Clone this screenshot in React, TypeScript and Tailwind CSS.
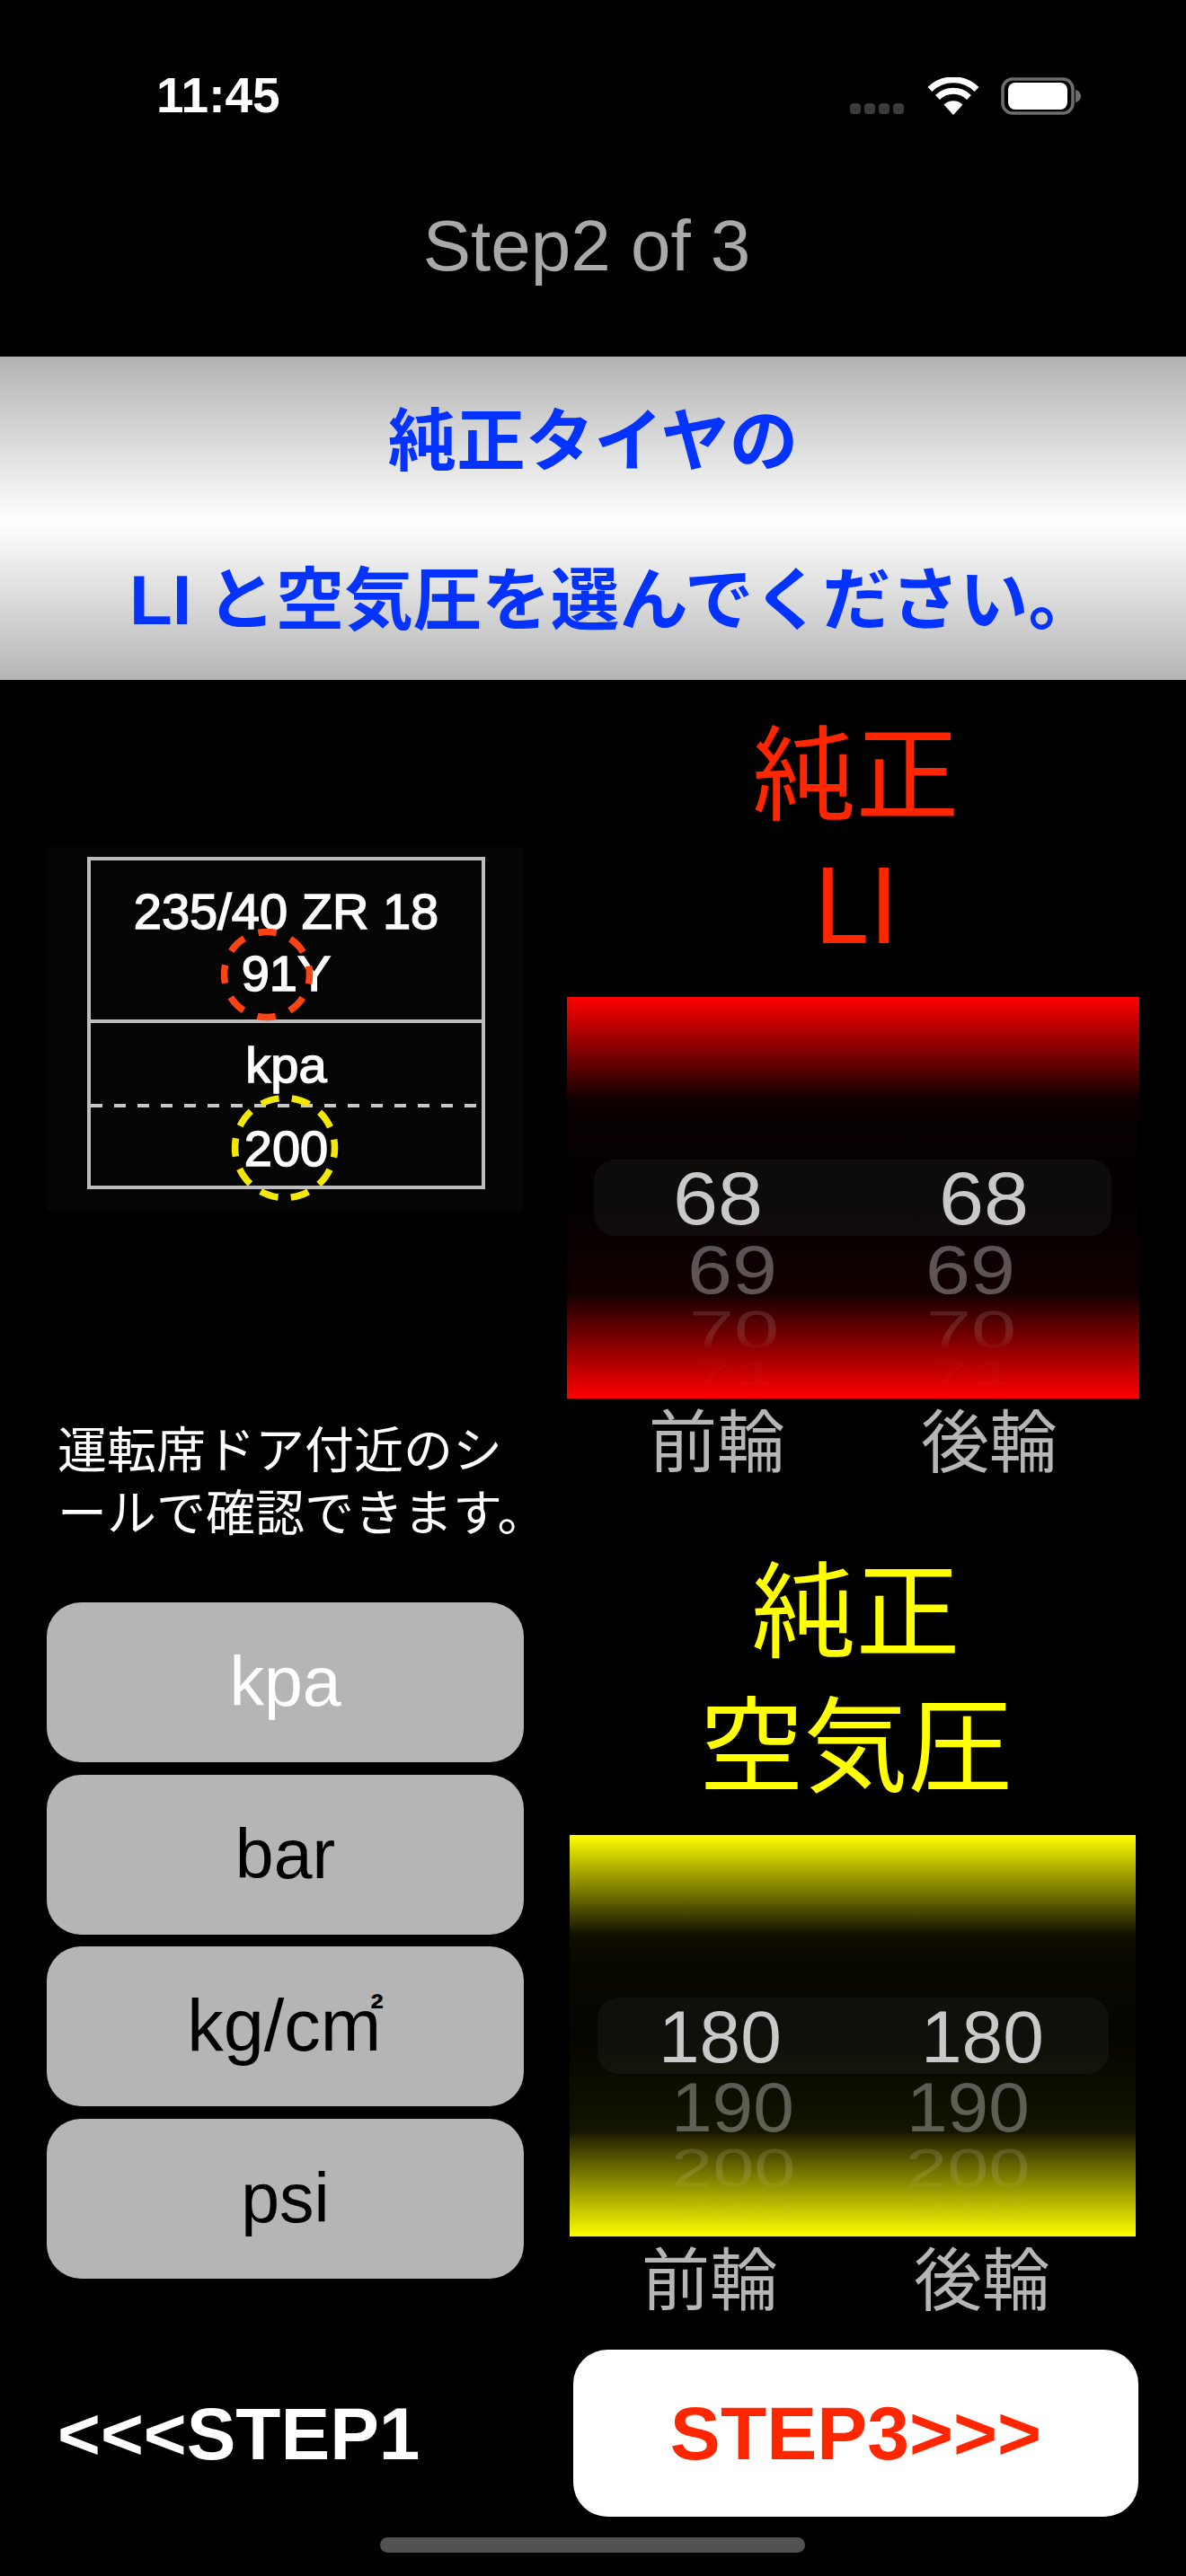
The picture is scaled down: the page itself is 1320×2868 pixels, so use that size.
import React from "react";

const sans = "font-['Liberation_Sans',Arial,sans-serif]";
const cjk = "font-['Noto_Sans_CJK_JP','Noto_Sans',sans-serif]";

type Wheel = {
  gradient: string;
  frame: string;
  band: string;
  halves: string;
  rows: { text: string; cls: string }[][];
};

function Picker({ gradient, frame, band, rows, halves }: Wheel) {
  return (
    <div className={`relative h-[447px] overflow-hidden ${frame} ${gradient}`}>
      <div className={`absolute top-[181px] h-[85px] rounded-[24px] bg-white/[.045] ${band}`} />
      <div className={`relative grid pl-[3px] ${halves} ${sans}`}>
        {rows.map((col, c) => (
          <div key={c} className="flex flex-col">
            {col.map((r) => (
              <div key={r.text + r.cls} className={`leading-[86px] whitespace-nowrap origin-top ${r.cls}`}>
                {r.text}
              </div>
            ))}
          </div>
        ))}
      </div>
    </div>
  );
}

const fade = "[mask-image:linear-gradient(#000_60%,transparent_92%)]";

const A1 = "mt-[184px] h-[84px] text-[90px] scale-y-[.93] text-[#c9c9c9]";
const A2 = "h-[74px] text-[90px] scale-y-[.84] text-white/[.33]";
const A3 = `h-[86px] -mb-[26px] text-[90px] scale-y-[.66] text-white/[.12] ${fade}`;
const A4 = "h-[40px] text-[90px] scale-y-[.4] text-white/[.015]";

const B1 = "mt-[182px] h-[81px] text-[82px] text-[#c9c9c9]";
const B2 = "h-[77px] text-[82px] scale-y-[.95] text-white/[.33]";
const B3 = `h-[86px] -mb-[26px] text-[83px] scale-y-[.73] text-white/[.12] ${fade}`;
const B4 = "h-[40px] text-[82px] scale-y-[.4] text-white/[.015]";

const redWheel: Wheel = {
  gradient:
    "bg-[linear-gradient(#ff0000_0%,#100000_25.5%,#070000_32%,#030000_50%,#120000_74%,#2d0000_76.5%,#ff0000_100%)]",
  frame: "w-[637px]",
  band: "left-[30px] w-[576px]",
  halves: "grid-cols-[318px_319px]",
  rows: [
    [
      { text: "68", cls: `${A1} ml-[115px]` },
      { text: "69", cls: `${A2} ml-[131px]` },
      { text: "70", cls: `${A3} ml-[133px]` },
      { text: "71", cls: `${A4} ml-[133px]` },
    ],
    [
      { text: "68", cls: `${A1} ml-[93px]` },
      { text: "69", cls: `${A2} ml-[78px]` },
      { text: "70", cls: `${A3} ml-[79px]` },
      { text: "71", cls: `${A4} ml-[79px]` },
    ],
  ],
};

const yellowWheel: Wheel = {
  gradient:
    "bg-[linear-gradient(#ffff00_0%,#100f00_25%,#080800_32%,#050500_50%,#141400_74%,#2f2d00_76%,#ffff00_100%)]",
  frame: "w-[630px] ml-[3px]",
  band: "left-[31px] w-[569px]",
  halves: "grid-cols-[315px_315px]",
  rows: [
    [
      { text: "180", cls: `${B1} ml-[96px]` },
      { text: "190", cls: `${B2} ml-[110px]` },
      { text: "200", cls: `${B3} ml-[110px]` },
      { text: "210", cls: `${B4} ml-[110px]` },
    ],
    [
      { text: "180", cls: `${B1} ml-[73px]` },
      { text: "190", cls: `${B2} ml-[57px]` },
      { text: "200", cls: `${B3} ml-[56px]` },
      { text: "210", cls: `${B4} ml-[56px]` },
    ],
  ],
};

function Wifi() {
  return (
    <svg width="58" height="42" viewBox="0 0 58 42" fill="none" className="mt-[86px] ml-[26px]">
      <path d="M29 42 L18.5 30.5 A15 15 0 0 1 39.5 30.5 Z" fill="#fff" />
      <path d="M11.5 22.5 A25 25 0 0 1 46.5 22.5" stroke="#fff" strokeWidth="7" />
      <path d="M3 13.5 A37 37 0 0 1 55 13.5" stroke="#fff" strokeWidth="7" />
    </svg>
  );
}

function Battery() {
  return (
    <svg width="90" height="42" viewBox="0 0 90 42" fill="none" className="mt-[86px] ml-[24px]">
      <rect x="2" y="2" width="78" height="38" rx="11" stroke="#6d6d6d" strokeWidth="3.5" />
      <rect x="8" y="6" width="66" height="30" rx="8" fill="#fff" />
      <path d="M83 14 C87 15 89 18 89 21 C89 24 87 27 83 28 Z" fill="#6d6d6d" />
    </svg>
  );
}

function Table() {
  const t = `text-white text-[56px] leading-[69px] text-center [-webkit-text-stroke:1.5px_white] ${sans}`;
  return (
    <div className="relative h-[405px] w-[530px] bg-[#050505] pl-[45px] pt-[11px]">
      <div className="flex h-[370px] w-[443px] flex-col border-4 border-[#bdbdbd]">
        <div className="h-[181px] border-b-4 border-[#bdbdbd] pt-[22px]">
          <div className={t}>235/40 ZR 18</div>
          <div className={t}>91Y</div>
        </div>
        <div className={`h-[90px] pt-[12px] ${t}`}>kpa</div>
        <div className="h-[4px] w-full bg-[repeating-linear-gradient(90deg,#c8c8c8_0_13px,transparent_13px_26px)]" />
        <div className={`pt-[11px] ${t}`}>200</div>
      </div>
      <svg className="absolute inset-0" width="530" height="405" viewBox="0 0 530 405" fill="none">
        <circle cx="245" cy="142" r="47.5" stroke="#ff4314" strokeWidth="7.5" strokeDasharray="20.5 16.8" strokeDashoffset="10" />
        <circle cx="265" cy="335" r="55.5" stroke="#f5e800" strokeWidth="7.5" strokeDasharray="20.5 14.37" strokeDashoffset="10" />
      </svg>
    </div>
  );
}

function UnitButton({ children, active }: { children: React.ReactNode; active?: boolean }) {
  return (
    <div
      className={`flex h-[178px] w-[531px] items-center justify-center rounded-[38px] bg-[#b5b5b5] text-[77px] ${sans} ${
        active ? "text-white" : "text-black"
      }`}
    >
      {children}
    </div>
  );
}

function Labels({ cls }: { cls: string }) {
  return (
    <div className={`flex h-[86px] items-center text-[76px] leading-none text-[#b6b6b6] ${cjk} ${cls}`}>
      <span>前輪</span>
      <span className="ml-[151px]">後輪</span>
    </div>
  );
}

export default function App() {
  return (
    <div className={`flex h-[2868px] w-[1320px] flex-col overflow-hidden bg-black ${sans}`}>
      <div className="flex h-[197px]">
        <div className="ml-[174px] mt-[73px] h-[66px] text-[55px] font-bold leading-[66px] text-white">11:45</div>
        <div className="ml-auto flex">
          <div className="mt-[115px] flex h-[12px] gap-[4px]">
            <span className="h-[12px] w-[12px] rounded-[4px] bg-[#3a3a3a]" />
            <span className="h-[12px] w-[12px] rounded-[4px] bg-[#3a3a3a]" />
            <span className="h-[12px] w-[12px] rounded-[4px] bg-[#3a3a3a]" />
            <span className="h-[12px] w-[12px] rounded-[4px] bg-[#3a3a3a]" />
          </div>
          <Wifi />
          <Battery />
          <div className="w-[116px]" />
        </div>
      </div>
      <div className="flex h-[200px] justify-center pr-[14px] pt-[21px] text-[80px] leading-[112px] text-[#a9a9a9]">
        Step2 of 3
      </div>

      <div
        className={`flex h-[360px] flex-col bg-[linear-gradient(#b3b3b3,#ffffff_51%,#b5b5b5)] text-[76.5px] font-bold text-[#0433ff] ${cjk}`}
      >
        <div className="mt-[42px] h-[177px] text-center leading-[92px]">純正タイヤの</div>
        <div className="whitespace-nowrap pl-[144px] leading-[92px]">
          <span className={`${sans} text-[78px]`}>LI</span>
          <span className="ml-[17px]">と空気圧を選んでください。</span>
        </div>
      </div>

      <div className="flex h-[1859px]">
        <div className="ml-[52px] w-[579px] pt-[186px]">
          <Table />
          <div className={`mt-[227px] pl-[12px] text-[55px] leading-[70px] text-white ${cjk}`}>
            <div>運転席ドア付近のシ</div>
            <div>ールで確認できます。</div>
          </div>
          <div className="mt-[69px] flex flex-col gap-[13.6px]">
            <UnitButton active>kpa</UnitButton>
            <UnitButton>bar</UnitButton>
            <UnitButton>
              <span className="text-[81px]">kg/cm</span>
              <span className="-ml-[12px] -mt-[40px] text-[44px] font-bold leading-none">²</span>
            </UnitButton>
            <UnitButton>psi</UnitButton>
          </div>
        </div>

        <div className="w-[640px]">
          <div className={`mt-[24px] h-[292px] pl-[3px] text-center text-[115px] leading-[146px] text-[#ff2600] ${cjk}`}>
            <div>純正</div>
            <div>LI</div>
          </div>
          <div className="mt-[37px]">
            <Picker {...redWheel} />
          </div>
          <Labels cls="pl-[91px]" />
          <div className={`mt-[67px] h-[300px] pl-[3px] text-center text-[116px] leading-[150px] text-[#ffff00] ${cjk}`}>
            <div>純正</div>
            <div>空気圧</div>
          </div>
          <div className="mt-[33px]">
            <Picker {...yellowWheel} />
          </div>
          <Labels cls="pl-[83px]" />
        </div>
      </div>

      <div className="flex h-[186px] items-center text-[82px] font-bold">
        <div className="ml-[64px] w-[574px] text-white">&lt;&lt;&lt;STEP1</div>
        <div className="flex h-[186px] w-[629px] items-center justify-center rounded-[38px] bg-white text-[84px] text-[#ff2600]">
          STEP3&gt;&gt;&gt;
        </div>
      </div>
      <div className="ml-[423px] mt-[23px] h-[17px] w-[473px] rounded-full bg-[#525252]" />
    </div>
  );
}
